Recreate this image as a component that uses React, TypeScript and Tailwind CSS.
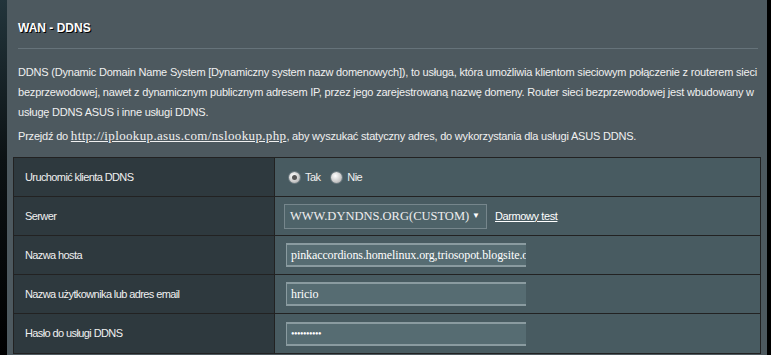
import React from 'react';

const rows = [
  { label: 'Nazwa hosta', value: 'pinkaccordions.homelinux.org,triosopot.blogsite.org' },
  { label: 'Nazwa użytkownika lub adres email', value: 'hricio' },
  { label: 'Hasło do usługi DDNS', value: '••••••••••', password: true },
];

const Radio = ({ checked }: { checked?: boolean }) => (
  <span className="inline-flex w-[11px] h-[11px] rounded-full items-center justify-center bg-[radial-gradient(circle_at_40%_35%,#ffffff,#c9c9c9_60%,#9a9a9a)] shadow-[0_0_0_1px_#6b7a80]">
    {checked && <span className="w-[5px] h-[5px] rounded-full bg-[#555]" />}
  </span>
);

export default function App() {
  return (
    <div className="flex w-[771px] h-[355px] overflow-hidden bg-black font-['Liberation_Sans',Arial,sans-serif]">
      {/* left edge */}
      <div className="w-[7px] shrink-0 bg-[linear-gradient(180deg,#22343b_0%,#0c1214_45%,#000_100%)]" />

      {/* main panel */}
      <div className="w-[760px] shrink-0 bg-[#4d595f] pl-[6px] pr-[5px]">
        <div className="px-[5px] pt-[20px]">
          <h1 className="text-[12px] leading-[16px] font-bold text-white [text-shadow:1px_1px_0_#000]">WAN - DDNS</h1>
          <div className="mt-[12px] h-px bg-[#2f3b40] border-b border-[#66737a] w-[740px]" />
          <div className="mt-[13px] text-[11px] leading-[20px] text-[#f0f0f0] tracking-[-0.2px]">
            <p>
              DDNS (Dynamic Domain Name System [Dynamiczny system nazw domenowych]), to usługa, która umożliwia klientom sieciowym połączenie z routerem sieci bezprzewodowej, nawet z dynamicznym publicznym adresem IP, przez jego zarejestrowaną nazwę domeny. Router sieci bezprzewodowej jest wbudowany w usługę DDNS ASUS i inne usługi DDNS.
            </p>
            <p className="mt-[4px]">
              Przejdź do{' '}
              <a className="underline font-['Liberation_Serif','Times_New_Roman',serif] text-[13px] tracking-[0.35px]">http://iplookup.asus.com/nslookup.php</a>
              , aby wyszukać statyczny adres, do wykorzystania dla usługi ASUS DDNS.
            </p>
          </div>
        </div>

        {/* settings table */}
        <div className="mt-[11px] w-[748px] border border-[#222] text-[11px] tracking-[-0.6px] text-[#f0f0f0]">
          <div className="grid grid-cols-[261px_1fr] h-[39px] border-b border-[#222]">
            <div className="bg-[#2e393e] border-r border-[#222] flex items-center pl-[11px]">Uruchomić klienta DDNS</div>
            <div className="bg-[#485b61] flex items-center pl-[14px] gap-[5px]">
              <Radio checked />
              <span className="mr-[6px]">Tak</span>
              <Radio />
              <span>Nie</span>
            </div>
          </div>
          <div className="grid grid-cols-[261px_1fr] h-[39px] border-b border-[#222]">
            <div className="bg-[#2e393e] border-r border-[#222] flex items-center pl-[11px]">Serwer</div>
            <div className="bg-[#485b61] flex items-center pl-[9px] gap-[8px]">
              <div className="w-[203px] h-[25px] bg-[#4e6369] border border-[#76868c] flex items-center pl-[5px] pr-[6px] justify-between">
                <span className="font-['Liberation_Serif','Times_New_Roman',serif] text-[12.5px] tracking-normal text-[#eee]">WWW.DYNDNS.ORG(CUSTOM)</span>
                <span className="text-[8px] tracking-normal text-white">▼</span>
              </div>
              <a className="underline text-white tracking-[-0.4px]">Darmowy test</a>
            </div>
          </div>
          {rows.map((r, i) => (
            <div key={r.label} className={`grid grid-cols-[261px_1fr] h-[39px] ${i < rows.length - 1 ? 'border-b border-[#222]' : ''}`}>
              <div className="bg-[#2e393e] border-r border-[#222] flex items-center pl-[11px]">{r.label}</div>
              <div className="bg-[#485b61] flex items-center pl-[11px]">
                <div className="w-[240px] h-[24px] bg-[#566c72] border-t-2 border-b-2 border-l border-[#8a9ba0] overflow-hidden whitespace-nowrap flex items-center pl-[4px]">
                  <span className={`font-['Liberation_Serif','Times_New_Roman',serif] ${r.password ? 'text-[10px] tracking-[-0.5px]' : 'text-[12px] tracking-[-0.1px]'} text-white`}>{r.value}</span>
                </div>
              </div>
            </div>
          ))}
        </div>
      </div>

      <div className="flex-1 bg-black" />
    </div>
  );
}
